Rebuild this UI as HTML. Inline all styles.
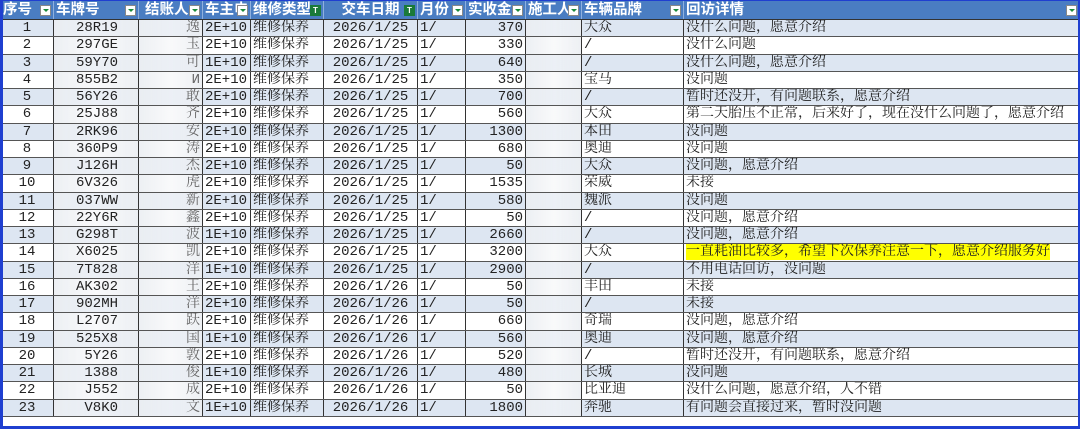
<!DOCTYPE html>
<html><head><meta charset="utf-8">
<style>
html,body{margin:0;padding:0;}
body{width:1080px;height:429px;background:#1f3fd0;position:relative;overflow:hidden;}
#f{position:absolute;left:3px;top:1px;width:1075px;height:425px;background:#fff;overflow:hidden;}
table{border-collapse:collapse;table-layout:fixed;position:absolute;left:-3px;top:0;width:1078px;}
td{height:16.26px;padding:0 2px;border-left:1px solid #333;border-bottom:1px solid #555;white-space:nowrap;overflow:hidden;font-family:"Liberation Mono","Noto Serif CJK SC",serif;font-size:14px;line-height:16px;color:#222;}
tr.h td{height:18px;background:#4a7dc2;color:#fff;font-family:"Liberation Sans","Noto Sans CJK SC",sans-serif;font-weight:bold;font-size:14.5px;border-left:1px solid #8fb0de;border-bottom:1px solid #333;position:relative;}
tr.o td{background:#dde6f2;}
tr.e td{background:#fff;}
.c{text-align:center}.r{text-align:right}
.p{text-align:right;padding-right:20px;}
.b{color:#666;}
.bl{background-image:linear-gradient(90deg,rgba(235,238,242,.9),rgba(245,246,248,.6),rgba(235,238,242,.9))!important;}
.dd{display:inline-block;width:11px;height:11px;background:#fff;border:1px solid #888;position:absolute;right:2px;top:4px;box-sizing:border-box;}
.dd:after{content:"";position:absolute;left:2px;top:3px;border-left:3px solid transparent;border-right:3px solid transparent;border-top:3px solid #1a8a3a;}
.ft{display:inline-block;width:11px;height:11px;background:#1a7a3a;position:absolute;right:2px;top:4px;color:#fff;font-size:8px;line-height:11px;text-align:center;}
.y{background:#ffff00;}
</style></head><body><div id="f">
<table>
<colgroup><col style="width:53px"><col style="width:85px"><col style="width:64px"><col style="width:48px"><col style="width:73px"><col style="width:94px"><col style="width:48px"><col style="width:60px"><col style="width:56px"><col style="width:102px"><col style="width:395px"></colgroup>
<tr class="h"><td>序号<span class="dd"></span></td><td>车牌号<span class="dd"></span></td><td>&nbsp;结账人<span class="dd"></span></td><td>车主电<span class="dd"></span></td><td>维修类型<span class="ft">T</span></td><td class="c">交车日期<span class="ft">T</span></td><td>月份<span class="dd"></span></td><td>实收金<span class="dd"></span></td><td>施工人<span class="dd"></span></td><td>车辆品牌<span class="dd"></span></td><td>回访详情<span class="dd"></span></td></tr>
<tr class="o"><td class="c">1</td><td class="p bl">28R19</td><td class="r bl b">逸</td><td>2E+10</td><td>维修保养</td><td class="c">2026/1/25</td><td>1/</td><td class="r">370</td><td class="bl"></td><td>大众</td><td>没什么问题，愿意介绍</td></tr>
<tr class="e"><td class="c">2</td><td class="p bl">297GE</td><td class="r bl b">玉</td><td>2E+10</td><td>维修保养</td><td class="c">2026/1/25</td><td>1/</td><td class="r">330</td><td class="bl"></td><td>/</td><td>没什么问题</td></tr>
<tr class="o"><td class="c">3</td><td class="p bl">59Y70</td><td class="r bl b">可</td><td>1E+10</td><td>维修保养</td><td class="c">2026/1/25</td><td>1/</td><td class="r">640</td><td class="bl"></td><td>/</td><td>没什么问题，愿意介绍</td></tr>
<tr class="e"><td class="c">4</td><td class="p bl">855B2</td><td class="r bl b">И</td><td>2E+10</td><td>维修保养</td><td class="c">2026/1/25</td><td>1/</td><td class="r">350</td><td class="bl"></td><td>宝马</td><td>没问题</td></tr>
<tr class="o"><td class="c">5</td><td class="p bl">56Y26</td><td class="r bl b">敢</td><td>2E+10</td><td>维修保养</td><td class="c">2026/1/25</td><td>1/</td><td class="r">700</td><td class="bl"></td><td>/</td><td>暂时还没开，有问题联系，愿意介绍</td></tr>
<tr class="e"><td class="c">6</td><td class="p bl">25J88</td><td class="r bl b">齐</td><td>2E+10</td><td>维修保养</td><td class="c">2026/1/25</td><td>1/</td><td class="r">560</td><td class="bl"></td><td>大众</td><td>第二天胎压不正常，后来好了，现在没什么问题了，愿意介绍</td></tr>
<tr class="o"><td class="c">7</td><td class="p bl">2RK96</td><td class="r bl b">安</td><td>2E+10</td><td>维修保养</td><td class="c">2026/1/25</td><td>1/</td><td class="r">1300</td><td class="bl"></td><td>本田</td><td>没问题</td></tr>
<tr class="e"><td class="c">8</td><td class="p bl">360P9</td><td class="r bl b">涛</td><td>2E+10</td><td>维修保养</td><td class="c">2026/1/25</td><td>1/</td><td class="r">680</td><td class="bl"></td><td>奥迪</td><td>没问题</td></tr>
<tr class="o"><td class="c">9</td><td class="p bl">J126H</td><td class="r bl b">杰</td><td>2E+10</td><td>维修保养</td><td class="c">2026/1/25</td><td>1/</td><td class="r">50</td><td class="bl"></td><td>大众</td><td>没问题，愿意介绍</td></tr>
<tr class="e"><td class="c">10</td><td class="p bl">6V326</td><td class="r bl b">虎</td><td>2E+10</td><td>维修保养</td><td class="c">2026/1/25</td><td>1/</td><td class="r">1535</td><td class="bl"></td><td>荣威</td><td>未接</td></tr>
<tr class="o"><td class="c">11</td><td class="p bl">037WW</td><td class="r bl b">新</td><td>2E+10</td><td>维修保养</td><td class="c">2026/1/25</td><td>1/</td><td class="r">580</td><td class="bl"></td><td>魏派</td><td>没问题</td></tr>
<tr class="e"><td class="c">12</td><td class="p bl">22Y6R</td><td class="r bl b">鑫</td><td>2E+10</td><td>维修保养</td><td class="c">2026/1/25</td><td>1/</td><td class="r">50</td><td class="bl"></td><td>/</td><td>没问题，愿意介绍</td></tr>
<tr class="o"><td class="c">13</td><td class="p bl">G298T</td><td class="r bl b">波</td><td>1E+10</td><td>维修保养</td><td class="c">2026/1/25</td><td>1/</td><td class="r">2660</td><td class="bl"></td><td>/</td><td>没问题，愿意介绍</td></tr>
<tr class="e"><td class="c">14</td><td class="p bl">X6025</td><td class="r bl b">凯</td><td>2E+10</td><td>维修保养</td><td class="c">2026/1/25</td><td>1/</td><td class="r">3200</td><td class="bl"></td><td>大众</td><td><span class="y">一直耗油比较多，希望下次保养注意一下，愿意介绍服务好</span></td></tr>
<tr class="o"><td class="c">15</td><td class="p bl">7T828</td><td class="r bl b">洋</td><td>1E+10</td><td>维修保养</td><td class="c">2026/1/25</td><td>1/</td><td class="r">2900</td><td class="bl"></td><td>/</td><td>不用电话回访，没问题</td></tr>
<tr class="e"><td class="c">16</td><td class="p bl">AK302</td><td class="r bl b">王</td><td>2E+10</td><td>维修保养</td><td class="c">2026/1/26</td><td>1/</td><td class="r">50</td><td class="bl"></td><td>丰田</td><td>未接</td></tr>
<tr class="o"><td class="c">17</td><td class="p bl">902MH</td><td class="r bl b">洋</td><td>2E+10</td><td>维修保养</td><td class="c">2026/1/26</td><td>1/</td><td class="r">50</td><td class="bl"></td><td>/</td><td>未接</td></tr>
<tr class="e"><td class="c">18</td><td class="p bl">L2707</td><td class="r bl b">跃</td><td>2E+10</td><td>维修保养</td><td class="c">2026/1/26</td><td>1/</td><td class="r">660</td><td class="bl"></td><td>奇瑞</td><td>没问题，愿意介绍</td></tr>
<tr class="o"><td class="c">19</td><td class="p bl">525X8</td><td class="r bl b">国</td><td>1E+10</td><td>维修保养</td><td class="c">2026/1/26</td><td>1/</td><td class="r">560</td><td class="bl"></td><td>奥迪</td><td>没问题，愿意介绍</td></tr>
<tr class="e"><td class="c">20</td><td class="p bl">5Y26</td><td class="r bl b">敦</td><td>2E+10</td><td>维修保养</td><td class="c">2026/1/26</td><td>1/</td><td class="r">520</td><td class="bl"></td><td>/</td><td>暂时还没开，有问题联系，愿意介绍</td></tr>
<tr class="o"><td class="c">21</td><td class="p bl">1388</td><td class="r bl b">俊</td><td>1E+10</td><td>维修保养</td><td class="c">2026/1/26</td><td>1/</td><td class="r">480</td><td class="bl"></td><td>长城</td><td>没问题</td></tr>
<tr class="e"><td class="c">22</td><td class="p bl">J552</td><td class="r bl b">成</td><td>2E+10</td><td>维修保养</td><td class="c">2026/1/26</td><td>1/</td><td class="r">50</td><td class="bl"></td><td>比亚迪</td><td>没什么问题，愿意介绍，人不错</td></tr>
<tr class="o"><td class="c">23</td><td class="p bl">V8K0</td><td class="r bl b">文</td><td>1E+10</td><td>维修保养</td><td class="c">2026/1/26</td><td>1/</td><td class="r">1800</td><td class="bl"></td><td>奔驰</td><td>有问题会直接过来，暂时没问题</td></tr>
</table>
</div></body></html>
